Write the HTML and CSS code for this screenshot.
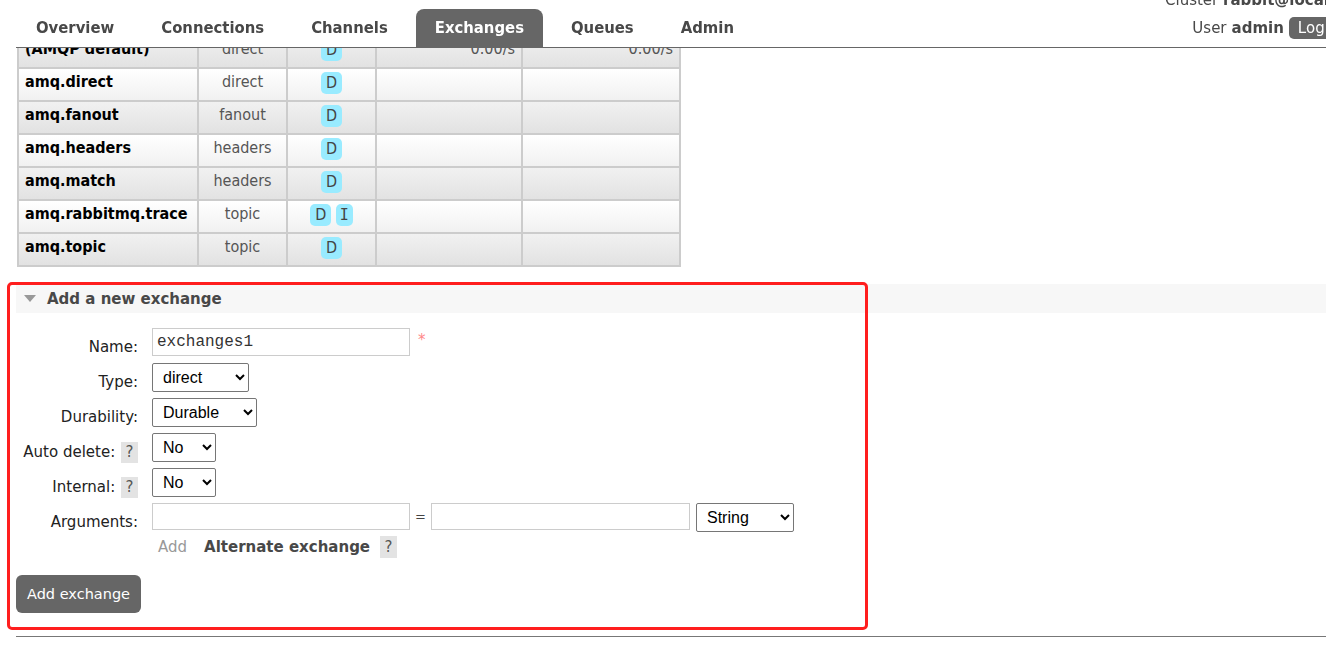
FILE: index.html
```html
<!DOCTYPE html>
<html lang="en">
<head>
  <meta charset="UTF-8" />
  <title>RabbitMQ Management - Exchanges</title>
  <link rel="stylesheet" href="styles.css">
</head>
<body>
  <!-- Fixed header with tabs and session info -->
  <header class="topbar">
    <nav class="tabs">
      <a href="#">Overview</a>
      <a href="#">Connections</a>
      <a href="#">Channels</a>
      <a href="#" class="active">Exchanges</a>
      <a href="#">Queues</a>
      <a href="#">Admin</a>
    </nav>
    <div class="session">
      <p class="cluster">Cluster <b>rabbit@localhost</b></p>
      <p class="user"><span>User</span> <b>admin</b> <button class="logout">Log out</button></p>
    </div>
  </header>

  <main class="page">
    <!-- Exchanges list (scrolled, first row sits under the header) -->
    <table class="list">
      <colgroup>
        <col class="c-name"><col class="c-type"><col class="c-feat"><col class="c-rate"><col class="c-rate2">
      </colgroup>
      <tbody>
        <tr class="alt1">
          <td class="name">(AMQP default)</td><td>direct</td><td class="feat"><span class="badge">D</span></td>
          <td class="rate">0.00/s</td><td class="rate">0.00/s</td>
        </tr>
        <tr class="alt2">
          <td class="name">amq.direct</td><td>direct</td><td class="feat"><span class="badge">D</span></td><td></td><td></td>
        </tr>
        <tr class="alt1">
          <td class="name">amq.fanout</td><td>fanout</td><td class="feat"><span class="badge">D</span></td><td></td><td></td>
        </tr>
        <tr class="alt2">
          <td class="name">amq.headers</td><td>headers</td><td class="feat"><span class="badge">D</span></td><td></td><td></td>
        </tr>
        <tr class="alt1">
          <td class="name">amq.match</td><td>headers</td><td class="feat"><span class="badge">D</span></td><td></td><td></td>
        </tr>
        <tr class="alt2">
          <td class="name">amq.rabbitmq.trace</td><td>topic</td><td class="feat"><span class="badge">D</span> <span class="badge badge-i">I</span></td><td></td><td></td>
        </tr>
        <tr class="alt1">
          <td class="name">amq.topic</td><td>topic</td><td class="feat"><span class="badge">D</span></td><td></td><td></td>
        </tr>
      </tbody>
    </table>

    <!-- Add a new exchange -->
    <section class="panel">
      <h2 class="panel-title"><span class="arrow"></span>Add a new exchange</h2>
      <form class="form">
        <div class="row">
          <label class="label" for="ex-name">Name:</label>
          <div class="field">
            <input id="ex-name" class="text" type="text" value="exchanges1"><span class="req">*</span>
          </div>
        </div>
        <div class="row">
          <label class="label" for="ex-type">Type:</label>
          <div class="field">
            <select id="ex-type" class="sel sel-type">
              <option>direct</option><option>fanout</option><option>headers</option><option>topic</option>
            </select>
          </div>
        </div>
        <div class="row">
          <label class="label" for="ex-dur">Durability:</label>
          <div class="field">
            <select id="ex-dur" class="sel sel-dur">
              <option>Durable</option><option>Transient</option>
            </select>
          </div>
        </div>
        <div class="row">
          <label class="label" for="ex-auto">Auto delete: <span class="help">?</span></label>
          <div class="field">
            <select id="ex-auto" class="sel sel-yn"><option>No</option><option>Yes</option></select>
          </div>
        </div>
        <div class="row">
          <label class="label" for="ex-int">Internal: <span class="help">?</span></label>
          <div class="field">
            <select id="ex-int" class="sel sel-yn"><option>No</option><option>Yes</option></select>
          </div>
        </div>
        <div class="row row-args">
          <label class="label">Arguments:</label>
          <div class="field">
            <div class="args-line">
              <input class="text arg-key" type="text">
              <span class="eq">=</span>
              <input class="text arg-val" type="text">
              <select class="sel sel-str"><option>String</option><option>Number</option><option>Boolean</option><option>List</option></select>
            </div>
            <div class="args-extra">
              <span class="add">Add</span>
              <b class="alt">Alternate exchange</b>
              <span class="help help-tall">?</span>
            </div>
          </div>
        </div>
        <button type="button" class="submit">Add exchange</button>
      </form>
    </section>
    <hr class="rule">
  </main>

  <!-- Annotation frame drawn over the form -->
  <div class="highlight"></div>
</body>
</html>
```

FILE: styles.css
```css
/* Base */
* {
  box-sizing: border-box;
}
html, body {
  margin: 0;
  padding: 0;
  overflow: hidden;
}
body {
  font-family: "DejaVu Sans", Verdana, sans-serif;
  font-size: 15px;
  color: #222;
  background: #fff;
}

/* Header */
.topbar {
  position: fixed;
  top: 0;
  left: 16px;
  right: 0;
  height: 48px;
  background: #fff;
  border-bottom: 1px solid #666;
  display: flex;
  align-items: flex-end;
  z-index: 10;
}
.tabs {
  display: flex;
  gap: 9px;
  padding-left: 1px;
}
.tabs a {
  display: block;
  height: 38px;
  padding: 0 19px;
  border-radius: 8px 8px 0 0;
  font: bold 16.5px "DejaVu Sans Condensed", sans-serif;
  line-height: 38px;
  color: #484848;
  text-decoration: none;
}
.tabs a.active {
  background: #666;
  color: #fff;
}
.session {
  margin-left: auto;
  margin-right: -37px;
  align-self: flex-start;
  text-align: right;
  white-space: nowrap;
}
.cluster {
  margin: -9px -3px 0 0;
  line-height: 18px;
  color: #484848;
}
.user {
  margin: 8px 0 0;
  display: flex;
  align-items: center;
  justify-content: flex-end;
  gap: 5px;
  color: #484848;
}
.logout {
  flex-shrink: 0;
  height: 22px;
  padding: 0 9px;
  border: none;
  border-radius: 5px;
  background: #666;
  color: #fff;
  font: 15px "DejaVu Sans", sans-serif;
}

/* Page */
.page {
  padding: 34px 0 0 16px;
}

/* Exchanges table */
.list {
  margin-left: 1px;
  width: 664px;
  table-layout: fixed;
  border-collapse: separate;
  border-spacing: 0;
  border: 1px solid #ccc;
  font-family: "DejaVu Sans Condensed", sans-serif;
  font-size: 16px;
}
.c-name { width: 180px; }
.c-type { width: 89px; }
.c-feat { width: 89px; }
.c-rate { width: 146px; }
.c-rate2 { width: 158px; }
.list td {
  border: 1px solid #ccc;
  padding: 2px 6px 7px;
  line-height: 22px;
  vertical-align: top;
  text-align: center;
  color: #555;
  white-space: nowrap;
}
.list td.name {
  text-align: left;
  font-weight: bold;
  color: #000;
  padding-left: 6px;
  padding-right: 0;
}
.list td.rate {
  text-align: right;
}
.list td.feat {
  padding-bottom: 6px;
}
.alt1 td {
  background: linear-gradient(#f1f1f1, #e2e2e2);
}
.alt2 td {
  background: linear-gradient(#fff, #f1f1f1);
}
.badge {
  display: inline-block;
  min-width: 7px;
  height: 22px;
  line-height: 22px;
  padding: 0 5px;
  border-radius: 5px;
  background: #99ebff;
  color: #444;
  text-align: center;
  vertical-align: -1px;
}
.badge-i {
  padding: 0 4px;
  font-family: "DejaVu Sans Mono", monospace;
  font-size: 15px;
}

/* Add a new exchange */
.panel {
  margin-top: 17px;
}
.panel-title {
  margin: 0;
  height: 29px;
  padding-left: 8px;
  display: flex;
  align-items: center;
  gap: 11px;
  background: #f7f7f7;
  font-size: 15px;
  font-weight: bold;
  color: #484848;
}
.arrow {
  width: 0;
  height: 0;
  border-left: 6.5px solid transparent;
  border-right: 6.5px solid transparent;
  border-top: 7px solid #999;
}
.form {
  margin-top: 15px;
}
.row {
  display: grid;
  grid-template-columns: 122px 1fr;
  column-gap: 14px;
  height: 35px;
}
.row-args {
  height: auto;
}
.label {
  padding-top: 9px;
  line-height: 20px;
  text-align: right;
  white-space: nowrap;
}
.help {
  display: inline-block;
  width: 17px;
  height: 21px;
  line-height: 21px;
  margin-left: 1px;
  background: #e3e3e3;
  color: #555;
  text-align: center;
}
.help-tall {
  height: 22px;
  line-height: 22px;
}
.field {
  white-space: nowrap;
}
.text {
  height: 28px;
  width: 258px;
  padding: 0 4px;
  border: 1px solid #ccc;
  font: 16px "Liberation Mono", monospace;
  color: #333;
  vertical-align: top;
}
.req {
  margin-left: 8px;
  color: #f88;
  vertical-align: top;
  line-height: 24px;
}
.sel {
  height: 29px;
  padding: 0 4px 0 6px;
  border: 1px solid #767676;
  border-radius: 2px;
  background: #fff;
  color: #000;
  font: 16px "Liberation Sans", Arial, sans-serif;
  vertical-align: top;
}
.sel-type { width: 97px; }
.sel-dur { width: 105px; }
.sel-yn { width: 64px; }
.sel-str { width: 98px; margin-left: 6px; }

.args-line {
  display: flex;
  align-items: flex-start;
}
.args-line .text {
  height: 27px;
}
.arg-val {
  width: 259px;
}
.eq {
  width: 21px;
  line-height: 27px;
  text-align: center;
  font-size: 13px;
  color: #444;
}
.args-extra {
  margin-top: 4px;
  padding-left: 6px;
  display: flex;
  align-items: baseline;
  height: 22px;
}
.add {
  color: #999;
  margin-right: 17px;
}
.alt {
  color: #484848;
  margin-right: 9px;
}
.submit {
  display: block;
  margin-top: 17px;
  height: 38px;
  padding: 0 11px;
  border: none;
  border-radius: 6px;
  background: #666;
  color: #fff;
  font: 14.5px "DejaVu Sans", sans-serif;
}
.rule {
  margin: 23px 0 0;
  border: none;
  border-top: 1px solid #777;
}

/* Red annotation frame */
.highlight {
  position: absolute;
  left: 7px;
  top: 282px;
  width: 861px;
  height: 348px;
  border: 3px solid #ff1e1e;
  border-radius: 5px;
  pointer-events: none;
}
```
